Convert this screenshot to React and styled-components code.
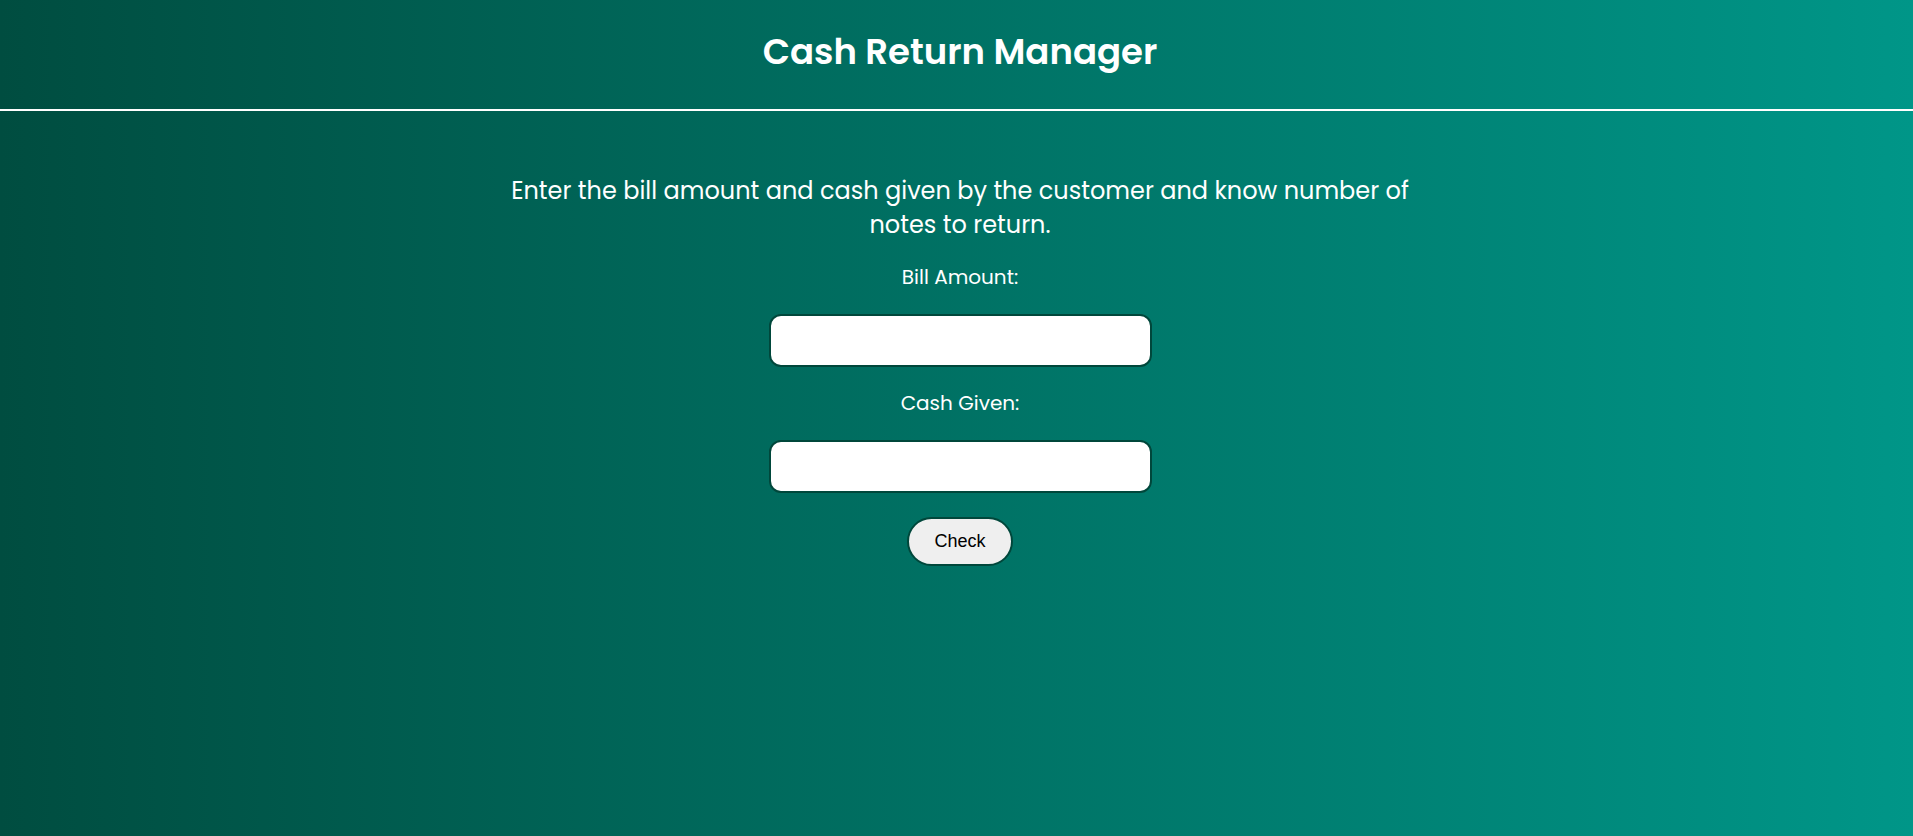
import React, { useState } from "react";
import styled, { createGlobalStyle } from "styled-components";

const GlobalStyle = createGlobalStyle`
  html, body {
    margin: 0;
    padding: 0;
  }
  body {
    font-family: "Poppins", Inter, "Noto Sans", sans-serif;
    color: white;
  }
  * {
    box-sizing: border-box;
  }
`;

const Page = styled.div`
  min-height: 100vh;
  background: linear-gradient(to right, #004d40, #009688);
`;

const Header = styled.header`
  padding: 31px 0 37px 7px;
  border-bottom: 2px solid white;
  text-align: center;
  h1 {
    margin: 0;
    font-size: 35.5px;
    line-height: 41px;
    font-weight: 600;
  }
`;

const Main = styled.main`
  display: flex;
  flex-direction: column;
  align-items: center;
  gap: 24px;
  padding: 63px 0 0 7px;
`;

const Intro = styled.p`
  margin: 0 0 -1px;
  max-width: 915px;
  font-size: 24px;
  line-height: 34px;
  text-align: center;
`;

const Label = styled.label`
  font-size: 20px;
  line-height: 25px;
`;

const Input = styled.input`
  width: 383px;
  height: 53px;
  border: 2px solid #00473b;
  border-radius: 12px;
  background: white;
  padding: 0 14px;
  font-size: 18px;
  outline: none;
`;

const Button = styled.button`
  height: 49px;
  padding: 0 25px;
  border: 2px solid #00473b;
  border-radius: 25px;
  background: #efefef;
  color: black;
  font-family: "Liberation Sans", Arial, sans-serif;
  font-size: 18px;
  cursor: pointer;
`;

const App = () => {
  const [bill, setBill] = useState("");
  const [cash, setCash] = useState("");

  return (
    <Page>
      <GlobalStyle />
      <Header>
        <h1>Cash Return Manager</h1>
      </Header>
      <Main>
        <Intro>
          Enter the bill amount and cash given by the customer and know number
          of notes to return.
        </Intro>
        <Label htmlFor="bill">Bill Amount:</Label>
        <Input
          id="bill"
          type="number"
          value={bill}
          onChange={(e) => setBill(e.target.value)}
        />
        <Label htmlFor="cash">Cash Given:</Label>
        <Input
          id="cash"
          type="number"
          value={cash}
          onChange={(e) => setCash(e.target.value)}
        />
        <Button>Check</Button>
      </Main>
    </Page>
  );
};

export default App;
